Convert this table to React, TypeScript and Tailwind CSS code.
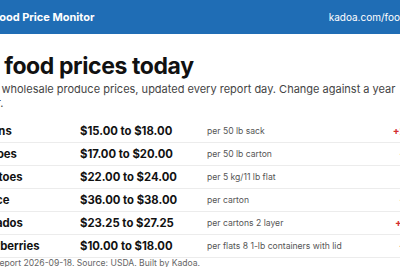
// Food Price Monitor — cropped view of the page (left/right edges fall outside the window)

const rows = [
  { name: 'Lemons', price: '$15.00 to $18.00', unit: 'per 50 lb sack', change: '+20.5%' },
  { name: 'Potatoes', price: '$17.00 to $20.00', unit: 'per 50 lb carton', change: '+9.5%' },
  { name: 'Tomatoes', price: '$22.00 to $24.00', unit: 'per 5 kg/11 lb flat', change: '+8.7%' },
  { name: 'Lettuce', price: '$36.00 to $38.00', unit: 'per carton', change: '+5.6%' },
  { name: 'Avocados', price: '$23.25 to $27.25', unit: 'per cartons 2 layer', change: '+16.5%' },
  { name: 'Strawberries', price: '$10.00 to $18.00', unit: 'per flats 8 1-lb containers with lid', change: '+4.3%' },
]

export default function App() {
  return (
    <div className="w-[400px] h-[267px] overflow-hidden bg-white font-['Inter',sans-serif] text-[#111]">
      <div className="-ml-[32px] w-[457px]">
        {/* Top bar */}
        <header className="h-[34px] bg-[#1f6db5] flex items-center justify-between pl-[25px] text-white">
          <span className="text-[11px] font-bold">Food Price Monitor</span>
          <span className="-mr-[15px] text-[10px]">kadoa.com/food-prices</span>
        </header>

        <main>
          <h1 className="mt-[18px] text-[23px] leading-[28px] font-bold tracking-[-0.4px]">US food prices today</h1>
          <p className="mt-[3px] text-[11px] leading-[13.5px] text-[#444]">
            USDA wholesale produce prices, updated every report day. Change against a year earlier.
          </p>

          <div className="mt-[10px]">
            {rows.map((r) => (
              <div key={r.name} className="h-[23px] flex items-center border-b border-[#ececec]">
                <div className="w-[112px] text-[11.3px] font-bold">{r.name}</div>
                <div className="w-[127px] text-[11.3px] font-bold">{r.price}</div>
                <div className="flex-1 text-[8.6px] text-[#555]">{r.unit}</div>
                <div className="-mr-[7px] text-[10px] font-bold text-[#d32f2f] text-right">{r.change}</div>
              </div>
            ))}
          </div>

          <p className="pl-[26px] text-[8.6px] leading-[10px] text-[#666]">
            Report 2026-09-18. Source: USDA. Built by Kadoa.
          </p>
        </main>
      </div>
    </div>
  )
}
